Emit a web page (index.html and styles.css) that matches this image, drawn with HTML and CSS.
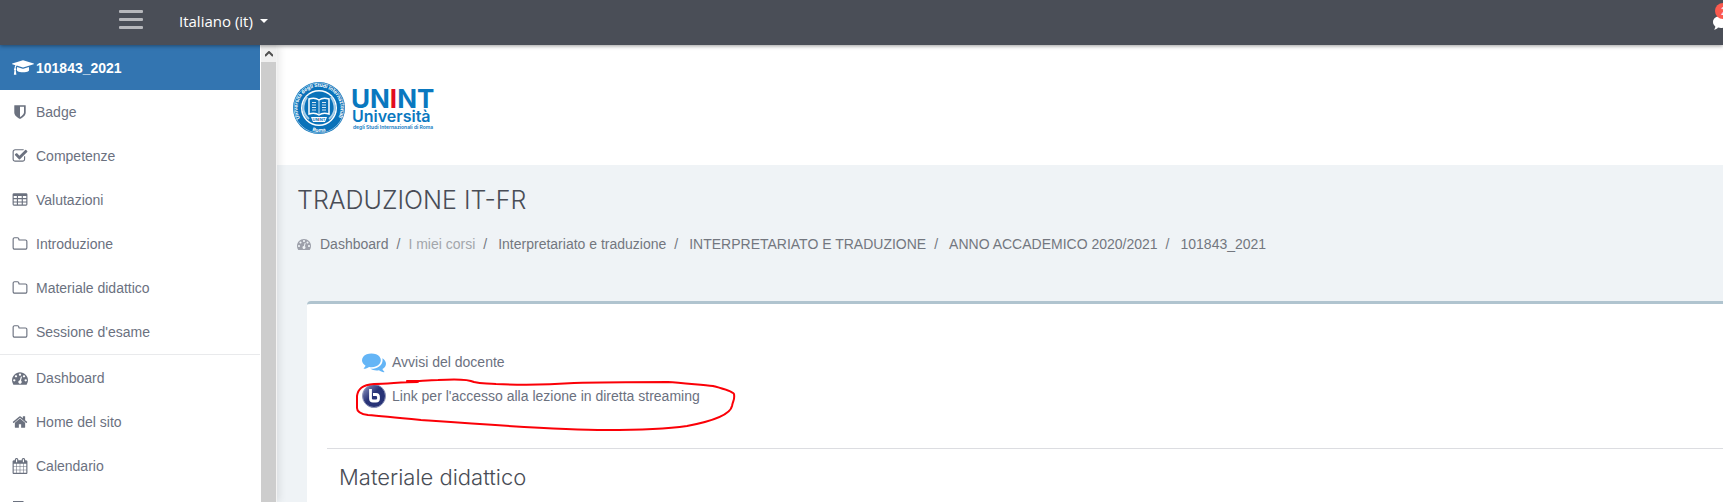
FILE: index.html
```html
<!DOCTYPE html>
<html lang="it">
<head>
    <meta charset="utf-8">
    <meta name="viewport" content="width=device-width, initial-scale=1.0">
    <title>TRADUZIONE IT-FR</title>
    <link rel="stylesheet" href="styles.css">
</head>
<body>
    <svg class="sprite" aria-hidden="true">
        <symbol id="i-folder" viewBox="0 0 1792 1792"><path d="M1600 1312v-704q0-40-28-68t-68-28h-704q-40 0-68-28t-28-68v-64q0-40-28-68t-68-28h-320q-40 0-68 28t-28 68v960q0 40 28 68t68 28h1216q40 0 68-28t28-68zm128-704v704q0 92-66 158t-158 66h-1216q-92 0-158-66t-66-158v-960q0-92 66-158t158-66h320q92 0 158 66t66 158v32h672q92 0 158 66t66 158z"/></symbol>
        <symbol id="i-dash" viewBox="0 0 1792 1792"><path d="M384 1152q0-53-37.500-90.500t-90.500-37.500-90.500 37.500-37.500 90.500 37.500 90.500 90.500 37.500 90.500-37.500 37.500-90.500zm192-448q0-53-37.500-90.500t-90.500-37.500-90.500 37.500-37.500 90.500 37.500 90.500 90.500 37.500 90.500-37.500 37.500-90.500zm428 481l101-382q6-26-7.500-48.500t-38.500-29.500-48 6.500-30 39.500l-101 382q-60 5-107 43.500t-63 98.500q-20 77 20 146t117 89 146-20 89-117q16-60-6-117t-72-91zm660-33q0-53-37.500-90.500t-90.500-37.500-90.500 37.500-37.500 90.500 37.500 90.500 90.500 37.500 90.500-37.500 37.500-90.500zm-640-640q0-53-37.500-90.500t-90.500-37.500-90.500 37.500-37.500 90.500 37.500 90.500 90.500 37.500 90.500-37.500 37.500-90.500zm448 192q0-53-37.500-90.500t-90.500-37.500-90.500 37.500-37.500 90.500 37.500 90.500 90.500 37.500 90.500-37.500 37.500-90.500zm320 448q0 261-141 483-19 29-54 29h-1402q-35 0-54-29-141-221-141-483 0-182 71-348t191-286 286-191 348-71 348 71 286 191 191 286 71 348z"/></symbol>
        <symbol id="i-comments" viewBox="0 0 1792 1792"><path d="M1408 768q0 139-94 257t-256.500 186.500-353.500 68.500q-86 0-176-16-124 88-278 128-36 9-86 16h-3q-11 0-20.500-8t-11.500-21q-1-3-1-6.500t.5-6.500 2-6l2.500-5 3.500-5.500 4-5 4.500-5 4-4.500q5-6 23-25t26-29.500 22.500-29 25-38.500 20.500-44q-124-72-195-177t-71-224q0-139 94-257t256.500-186.500 353.500-68.500 353.500 68.500 256.500 186.500 94 257zm384 256q0 120-71 224.500t-195 176.500q10 24 20.500 44t25 38.500 22.500 29 26 29.500 23 25q1 1 4 4.500t4.500 5 4 5 3.500 5.500l2.500 5 2 6 .5 6.500-1 6.500q-3 14-13 22t-22 7q-50-7-86-16-154-40-278-128-90 16-176 16-271 0-472-132 58 4 88 4 161 0 309-45t264-129q125-92 192-212t67-254q0-77-23-152 129 71 204 178t75 230z"/></symbol>
    </svg>

    <header class="topbar">
        <button type="button" class="menu-toggle" aria-label="Menu">
            <span class="bar"></span>
            <span class="bar"></span>
            <span class="bar"></span>
        </button>
        <button type="button" class="lang">Italiano (it) <span class="caret"></span></button>
        <button type="button" class="messages" aria-label="Messaggi">
            <svg class="icon" viewBox="0 0 16 16"><path d="M8 1c4 0 8 2 8 6s-4 6-8 6c-1 0-2 0-3-.4C4 14 2.500 14.600 1 14.600c1-1 1.400-2 1.300-3.200C1 10.400 0 9 0 7c0-4 4-6 8-6z"/></svg>
            <span class="count">2</span>
        </button>
    </header>

    <div class="page">
        <aside class="drawer">
            <nav class="nav">
                <a href="#" class="nav-item active">
                    <svg class="icon cap" viewBox="0 0 2304 1792"><path d="M1774 836l18 316q4 69-82 128t-235 93.500-323 34.500-323-34.500-235-93.500-82-128l18-316 574 181q22 7 48 7t48-7zm530-324q0 23-22 31l-1120 352q-4 1-10 1t-10-1l-652-206q-43 34-71 111.500t-34 178.500q63 36 63 109 0 69-58 107l58 433q2 14-8 25-9 11-24 11h-192q-15 0-24-11-10-11-8-25l58-433q-58-38-58-107 0-73 65-111 11-207 98-330l-333-104q-22-8-22-31t22-31l1120-352q4-1 10-1t10 1l1120 352q22 8 22 31z"/></svg>
                    101843_2021
                </a>
                <a href="#" class="nav-item">
                    <svg class="icon" viewBox="0 0 1792 1792"><path d="M1344 960v-640h-448v1137q119-63 213-137 235-184 235-360zm192-768v768q0 86-33.500 170.500t-83 150-118 127.500-126.500 103-121 77.500-89.500 49.500-42.500 20q-12 6-26 6t-26-6q-16-7-42.500-20t-89.500-49.500-121-77.500-126.500-103-118-127.500-83-150-33.500-170.500v-768q0-26 19-45t45-19h1152q26 0 45 19t19 45z"/></svg>
                    Badge
                </a>
                <a href="#" class="nav-item">
                    <svg class="icon" viewBox="0 0 1792 1792"><path d="M1472 930v318q0 119-84.500 203.500t-203.500 84.500h-832q-119 0-203.500-84.500t-84.500-203.500v-832q0-119 84.500-203.500t203.500-84.500h832q63 0 117 25 15 7 18 23 3 17-9 29l-49 49q-10 10-23 10-3 0-9-2-23-6-45-6h-832q-66 0-113 47t-47 113v832q0 66 47 113t113 47h832q66 0 113-47t47-113v-254q0-13 9-22l64-64q10-10 23-10 6 0 12 3 20 8 20 29zm231-489l-814 814q-24 24-57 24t-57-24l-430-430q-24-24-24-57t24-57l110-110q24-24 57-24t57 24l263 263 647-647q24-24 57-24t57 24l110 110q24 24 24 57t-24 57z"/></svg>
                    Competenze
                </a>
                <a href="#" class="nav-item">
                    <svg class="icon" viewBox="0 0 1792 1792"><path fill-rule="evenodd" d="M224 128h1344q160 0 160 160v1088q0 160-160 160h-1344q-160 0-160-160v-1088q0-160 160-160zM192 448v224h352v-224zM672 448v224h416v-224zM1216 448v224h384v-224zM192 800v256h352v-256zM672 800v256h416v-256zM1216 800v256h384v-256zM192 1184v192q0 32 32 32h320v-224zM672 1184v224h416v-224zM1216 1184v224h352q32 0 32-32v-192z"/></svg>
                    Valutazioni
                </a>
                <a href="#" class="nav-item"><svg class="icon"><use href="#i-folder"/></svg>Introduzione</a>
                <a href="#" class="nav-item"><svg class="icon"><use href="#i-folder"/></svg>Materiale didattico</a>
                <a href="#" class="nav-item"><svg class="icon"><use href="#i-folder"/></svg>Sessione d'esame</a>
                <div class="nav-divider"></div>
                <a href="#" class="nav-item"><svg class="icon"><use href="#i-dash"/></svg>Dashboard</a>
                <a href="#" class="nav-item">
                    <svg class="icon" viewBox="0 0 1792 1792"><path d="M1472 992v480q0 26-19 45t-45 19h-384v-384h-256v384h-384q-26 0-45-19t-19-45v-480q0-1 .5-3t.5-3l575-474 575 474q1 2 1 6zm223-69l-62 74q-8 9-21 11h-3q-13 0-21-7l-692-577-692 577q-12 8-24 7-13-2-21-11l-62-74q-8-10-7-23.500t11-21.500l719-599q32-26 76-26t76 26l244 204v-195q0-14 9-23t23-9h192q14 0 23 9t9 23v408l219 182q10 8 11 21.500t-7 23.500z"/></svg>
                    Home del sito
                </a>
                <a href="#" class="nav-item">
                    <svg class="icon" viewBox="0 0 1792 1792"><path d="M192 1664h288v-288h-288v288zm352 0h320v-288h-320v288zm-352-352h288v-320h-288v320zm352 0h320v-320h-320v320zm-352-384h288v-288h-288v288zm736 736h320v-288h-320v288zm-384-736h320v-288h-320v288zm768 736h288v-288h-288v288zm-384-352h320v-320h-320v320zm-352-864v-288q0-13-9.500-22.500t-22.500-9.500h-64q-13 0-22.500 9.500t-9.500 22.500v288q0 13 9.500 22.500t22.500 9.500h64q13 0 22.500-9.500t9.500-22.500zm736 864h288v-320h-288v320zm-384-384h320v-288h-320v288zm384 0h288v-288h-288v288zm32-480v-288q0-13-9.500-22.500t-22.500-9.500h-64q-13 0-22.500 9.500t-9.500 22.500v288q0 13 9.500 22.500t22.500 9.500h64q13 0 22.500-9.500t9.500-22.500zm384-64v1280q0 52-38 90t-90 38h-1408q-52 0-90-38t-38-90v-1280q0-52 38-90t90-38h128v-96q0-66 47-113t113-47h64q66 0 113 47t47 113v96h384v-96q0-66 47-113t113-47h64q66 0 113 47t47 113v96h128q52 0 90 38t38 90z"/></svg>
                    Calendario
                </a>
                <a href="#" class="nav-item" aria-label="File">
                    <svg class="icon file" viewBox="0 0 16 18"><path d="M1 0h10l4 4v14H1zM3 2v14h10V6H9V2z" fill-rule="evenodd"/></svg>
                </a>
            </nav>
            <div class="scrollbar">
                <div class="scroll-up">
                    <svg class="scroll-arrow" viewBox="0 0 8 6"><path d="M0 5l4-4 4 4" fill="none" stroke="#505050" stroke-width="2"/></svg>
                </div>
            </div>
        </aside>

        <main class="main">
            <div class="brand">
                <a href="#" aria-label="UNINT">
                    <svg class="logo" viewBox="0 0 144 54">
                        <defs>
                            <path id="ringTop" d="M8 37.500A21.500 21.500 0 1 1 46 37.500"/>
                            <path id="ringBottom" d="M13 46.500A24 24 0 0 0 41 46.500"/>
                        </defs>
                        <circle cx="27" cy="27" r="26" fill="#0a72b9"/>
                        <circle cx="27" cy="27" r="25" fill="none" stroke="#7db5dc" stroke-width="1"/>
                        <circle cx="27" cy="27" r="18" fill="#fff"/>
                        <circle cx="27" cy="27" r="16.500" fill="#0a72b9"/>
                        <path d="M15 16c-5 8-5 16 2 22M39 16c5 8 5 16-2 22" fill="none" stroke="#a9cfe8" stroke-width="2"/>
                        <path d="M17 18q6-2 10 1 4-3 10-1v15q-6-2-10 1-4-3-10-1z" fill="#0a72b9" stroke="#fff" stroke-width="1.500"/>
                        <path d="M27 19v15M20 21.500h4M20 24h4M20 26.500h4M20 29h4M30 21.500h4M30 24h4M30 26.500h4M30 29h4" stroke="#d7e8f4" stroke-width="1"/>
                        <path d="M19 36h16l-2 5H21z" fill="#fff"/>
                        <text class="seal-small" x="27" y="40" text-anchor="middle">UN<tspan class="red">I</tspan>NT</text>
                        <text class="seal-text"><textPath href="#ringTop">Università degli Studi Internazionali</textPath></text>
                        <text class="seal-text"><textPath href="#ringBottom" startOffset="50%" text-anchor="middle">Roma</textPath></text>
                        <text class="logo-name" x="59" y="27">UN<tspan class="red">I</tspan>NT</text>
                        <text class="logo-sub" x="60" y="41">Università</text>
                        <text class="logo-tag" x="61" y="48">degli Studi Internazionali di Roma</text>
                    </svg>
                </a>
            </div>

            <div class="page-header">
                <h1 class="title">TRADUZIONE IT-FR</h1>
                <nav class="breadcrumb">
                    <svg class="icon"><use href="#i-dash"/></svg>
                    <a href="#" class="crumb">Dashboard</a>
                    <span class="crumb muted">I miei corsi</span>
                    <a href="#" class="crumb">Interpretariato e traduzione</a>
                    <a href="#" class="crumb">INTERPRETARIATO E TRADUZIONE</a>
                    <a href="#" class="crumb">ANNO ACCADEMICO 2020/2021</a>
                    <a href="#" class="crumb">101843_2021</a>
                </nav>
            </div>

            <section class="card">
                <ul class="activities">
                    <li class="activity">
                        <svg class="activity-icon forum"><use href="#i-comments"/></svg>
                        <a href="#">Avvisi del docente</a>
                    </li>
                    <li class="activity marked">
                        <svg class="activity-icon" viewBox="0 0 24 24">
                            <defs>
                                <linearGradient id="bbb" x1="0" y1="0" x2="1" y2="1">
                                    <stop offset="0" stop-color="#9aa3cc"/>
                                    <stop offset=".45" stop-color="#283377"/>
                                    <stop offset="1" stop-color="#283377"/>
                                </linearGradient>
                            </defs>
                            <circle cx="12" cy="12" r="11.500" fill="url(#bbb)" stroke="#8f96bb" stroke-width="1"/>
                            <path d="M8.500 5v9.500q0 2.500 2.500 2.500h3q2.500 0 2.500-2.500V13q0-2.500-2.500-2.500h-3" fill="none" stroke="#fff" stroke-width="2.800"/>
                        </svg>
                        <a href="#">Link per l'accesso alla lezione in diretta streaming</a>
                        <!-- red pen mark around the streaming link -->
                        <svg class="pen" viewBox="0 0 380 54"><path d="M51 3C58 4 70 2 82 2C98 1 112 1 118 4C126 6 130 5 140 6C160 7 190 7 218 5C250 4 295 4 312 4C325 5 345 7 357 8C368 11 376 13 378 16C379 22 377 22 376 28C374 38 352 44 331 48C310 51 285 52 250 52C200 52 120 46 65 42C45 40 25 38 12 37C4 36 1 34 1 30V18C2 11 6 7 18 6C32 6 45 4 62 4M51 3H62" fill="none" stroke="#fb0007" stroke-width="2" stroke-linecap="round" stroke-linejoin="round"/></svg>
                    </li>
                </ul>
                <h3 class="section-title">Materiale didattico</h3>
            </section>
        </main>
    </div>
</body>
</html>
```

FILE: styles.css
```css
* {
    box-sizing: border-box;
    margin: 0;
    padding: 0;
}
body {
    display: flex;
    flex-direction: column;
    height: 100vh;
    overflow: hidden;
    font-family: "Liberation Sans", Arial, sans-serif;
    font-size: 14px;
    line-height: 20px;
    color: #6b717f;
    background-color: #eff3f6;
}
a {
    color: inherit;
    text-decoration: none;
}
button {
    background: none;
    border: none;
    color: inherit;
    font: inherit;
}
.sprite {
    display: none;
}
.icon {
    width: 16px;
    height: 16px;
    flex: none;
    fill: currentColor;
}

/* top bar */
.topbar {
    display: flex;
    align-items: center;
    flex: none;
    height: 45px;
    padding-left: 119px;
    background-color: #4a4e57;
    color: #fff;
    box-shadow: 0 1px 4px rgba(0, 0, 0, 0.4);
    position: relative;
    z-index: 2;
}
.menu-toggle {
    display: flex;
    flex-direction: column;
    gap: 5px;
    width: 24px;
    padding-bottom: 6px;
}
.bar {
    height: 3px;
    border-radius: 1px;
    background-color: #b7b8bc;
}
.lang {
    display: flex;
    align-items: center;
    gap: 7px;
    margin-left: 36px;
    padding-bottom: 4px;
    font-family: "Open Sans", sans-serif;
    font-size: 15px;
}
.caret {
    border-top: 4px solid #fff;
    border-left: 4px solid transparent;
    border-right: 4px solid transparent;
}
.messages {
    position: relative;
    width: 10px;
    height: 16px;
    margin-left: auto;
}
.messages .icon {
    display: block;
}
.count {
    position: absolute;
    left: 2px;
    top: -12px;
    width: 18px;
    height: 16px;
    border-radius: 8px;
    background-color: #fb5a4e;
    font-size: 11px;
    line-height: 16px;
    text-align: center;
}

/* side drawer */
.page {
    display: flex;
    flex: 1;
    min-height: 0;
}
.drawer {
    display: flex;
    flex: none;
    gap: 1px;
    width: 277px;
    overflow: hidden;
    background-color: #fff;
    border-right: 1px solid #f3f3f3;
    box-shadow: 2px 0 8px rgba(0, 0, 0, 0.1);
    z-index: 1;
}
.nav {
    flex: 1;
}
.nav-item {
    display: flex;
    align-items: center;
    gap: 8px;
    height: 44px;
    padding-left: 12px;
}
.nav-item.active {
    gap: 2px;
    height: 45px;
    background-color: #3375b1;
    color: #fff;
    font-weight: bold;
}
.icon.cap {
    width: 22px;
    height: 17px;
}
.icon.file {
    height: 18px;
}
.nav-divider {
    height: 2px;
    border-top: 1px solid #e9eaec;
}
.scrollbar {
    width: 15px;
    background-color: #cdcdcd;
}
.scroll-up {
    display: flex;
    align-items: center;
    justify-content: center;
    height: 17px;
    background-color: #f0f0f0;
}
.scroll-arrow {
    width: 8px;
    height: 6px;
}

/* content */
.main {
    flex: 1;
    min-width: 0;
    overflow: hidden;
}
.brand {
    height: 120px;
    padding: 36px 15px;
    background-color: #fff;
}
.logo {
    display: block;
    width: 144px;
    height: 54px;
}
.logo text {
    font-family: Inter, sans-serif;
    fill: #0a78bf;
}
.logo .logo-name {
    font-size: 26px;
    font-weight: 700;
}
.logo .logo-sub {
    font-size: 16px;
    font-weight: 600;
}
.logo .logo-tag {
    font-size: 5px;
    font-weight: 600;
}
.logo .seal-text {
    font-size: 5px;
    font-weight: 700;
    fill: #fff;
}
.logo .seal-small {
    font-size: 4px;
    font-weight: 700;
}
.logo .red {
    fill: #e30b20;
}
.page-header {
    padding: 20px 20px 47px;
}
.title {
    font-family: Inter, sans-serif;
    font-size: 25px;
    font-weight: 300;
    line-height: 30px;
    color: #494d56;
}
.breadcrumb {
    display: flex;
    align-items: center;
    margin-top: 19px;
    color: #73777f;
}
.breadcrumb .icon {
    width: 14px;
    height: 14px;
    margin-right: 9px;
    color: #9da0aa;
}
.crumb + .crumb::before {
    content: "/";
    padding: 0 11px 0 8px;
    color: #73777f;
}
.crumb.muted {
    color: #a3a6ab;
}
.crumb + .crumb.muted::before {
    padding-right: 8px;
}
.card {
    margin-left: 30px;
    padding: 41px 0 40px 20px;
    background-color: #fff;
    border-top: 3px solid #b0c4cf;
    border-top-left-radius: 4px;
}
.activities {
    padding: 0 0 35px 35px;
    border-bottom: 1px solid #dcdde1;
    list-style: none;
}
.activity {
    display: flex;
    align-items: center;
    gap: 6px;
    height: 34px;
    position: relative;
}
.activity-icon {
    width: 24px;
    height: 24px;
    flex: none;
}
.forum {
    fill: #64b5f6;
}
.pen {
    position: absolute;
    left: -6px;
    top: -1px;
    width: 380px;
    height: 54px;
}
.section-title {
    padding: 15px 12px;
    font-family: Inter, sans-serif;
    font-size: 22px;
    font-weight: 300;
    line-height: 26px;
    color: #494d56;
}
```
